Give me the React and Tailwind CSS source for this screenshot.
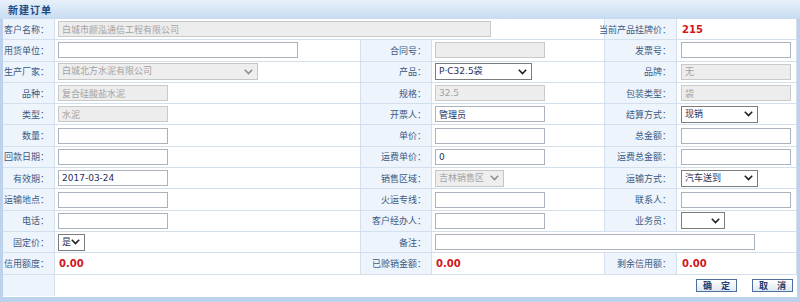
import React from 'react';

const cjk = "font-['Noto_Sans_CJK_SC',sans-serif]";
const num = "font-['DejaVu_Sans','Noto_Sans_CJK_SC',sans-serif]";

const Lbl = ({ children }) => (
  <div className={`flex items-center justify-end pr-[5px] bg-[#eef4fb] border-r border-b border-[#d3dfec] text-[9px] leading-none text-[#3a5a85] whitespace-nowrap ${cjk}`}>
    {children}
  </div>
);

const Val = ({ children, wide = false, pad = 'pl-[3px]' }) => (
  <div className={`flex items-center bg-white border-r border-b border-[#d3dfec] ${pad} ${wide ? 'col-span-3' : ''}`}>
    {children}
  </div>
);

const Field = ({ w = 'w-[110px]', value = '', disabled = false }) => (
  <input
    defaultValue={value}
    disabled={disabled}
    className={`h-[16px] border px-[3px] text-[9px] leading-none outline-none ${num} ${w} ${
      disabled
        ? 'bg-[#eeeded] border-[#c9c9c9] text-[#a3a3a3]'
        : 'bg-white border-[#a9b2bd] text-[#1e2f5c]'
    }`}
  />
);

// dropdown drawn as a box so the text and chevron sit where the old IE control puts them
const Pick = ({ w, value = '', disabled = false }) => (
  <div
    role="combobox"
    className={`h-[17px] flex items-center justify-between border pl-[3px] pr-[4px] text-[9px] leading-none whitespace-nowrap ${num} ${w} ${
      disabled
        ? 'bg-[#eeeeee] border-[#c6c6c6] text-[#a3a3a3]'
        : 'bg-white border-[#7c7c7c] text-[#1e2f5c]'
    }`}
  >
    <span>{value}</span>
    <svg width="9" height="6" viewBox="0 0 9 6" className="shrink-0">
      <path d="M0.8 0.8 L4.5 4.6 L8.2 0.8" fill="none" stroke={disabled ? '#8d8d8d' : '#1c1c1c'} strokeWidth="1.5" />
    </svg>
  </div>
);

const Red = ({ children }) => (
  <span className={`text-[10px] font-bold text-[#d3151c] ${num}`}>{children}</span>
);

export default function App() {
  return (
    <div className="w-[800px] h-[302px] bg-white flex flex-col overflow-hidden">
      <div className="h-[19px] shrink-0 flex items-center pl-[8px] bg-gradient-to-b from-[#e8f1fa] to-[#c7dbf1]">
        <span className={`text-[10px] font-bold tracking-[1px] text-[#1d4a84] ${cjk}`}>新建订单</span>
      </div>

      <div className="flex-1 border-l-[3px] border-r-[3px] border-b-[5px] border-[#bcd2ec] grid grid-cols-[52px_306px_71px_173px_72px_120px] auto-rows-[21.3px]">
        <Lbl>客户名称：</Lbl>
        <Val wide><Field w="w-[433px]" value="白城市颜泓通信工程有限公司" disabled /></Val>
        <Lbl>当前产品挂牌价：</Lbl>
        <Val pad="pl-[5px]"><Red>215</Red></Val>

        <Lbl>用货单位：</Lbl>
        <Val><Field w="w-[240px]" /></Val>
        <Lbl>合同号：</Lbl>
        <Val><Field disabled /></Val>
        <Lbl>发票号：</Lbl>
        <Val pad="pl-[4px]"><Field /></Val>

        <Lbl>生产厂家：</Lbl>
        <Val><Pick w="w-[200px]" value="白城北方水泥有限公司" disabled /></Val>
        <Lbl>产品：</Lbl>
        <Val><Pick w="w-[97px]" value="P·C32.5袋" /></Val>
        <Lbl>品牌：</Lbl>
        <Val pad="pl-[4px]"><Field value="无" disabled /></Val>

        <Lbl>品种：</Lbl>
        <Val><Field value="复合硅酸盐水泥" disabled /></Val>
        <Lbl>规格：</Lbl>
        <Val><Field value="32.5" disabled /></Val>
        <Lbl>包装类型：</Lbl>
        <Val pad="pl-[4px]"><Field value="袋" disabled /></Val>

        <Lbl>类型：</Lbl>
        <Val><Field value="水泥" disabled /></Val>
        <Lbl>开票人：</Lbl>
        <Val><Field value="管理员" /></Val>
        <Lbl>结算方式：</Lbl>
        <Val pad="pl-[4px]"><Pick w="w-[77px]" value="现销" /></Val>

        <Lbl>数量：</Lbl>
        <Val><Field /></Val>
        <Lbl>单价：</Lbl>
        <Val><Field /></Val>
        <Lbl>总金额：</Lbl>
        <Val pad="pl-[4px]"><Field /></Val>

        <Lbl>回款日期：</Lbl>
        <Val><Field /></Val>
        <Lbl>运费单价：</Lbl>
        <Val><Field value="0" /></Val>
        <Lbl>运费总金额：</Lbl>
        <Val pad="pl-[4px]"><Field /></Val>

        <Lbl>有效期：</Lbl>
        <Val><Field value="2017-03-24" /></Val>
        <Lbl>销售区域：</Lbl>
        <Val><Pick w="w-[69px]" value="吉林销售区" disabled /></Val>
        <Lbl>运输方式：</Lbl>
        <Val pad="pl-[4px]"><Pick w="w-[77px]" value="汽车送到" /></Val>

        <Lbl>运输地点：</Lbl>
        <Val><Field /></Val>
        <Lbl>火运专线：</Lbl>
        <Val><Field /></Val>
        <Lbl>联系人：</Lbl>
        <Val pad="pl-[4px]"><Field /></Val>

        <Lbl>电话：</Lbl>
        <Val><Field /></Val>
        <Lbl>客户经办人：</Lbl>
        <Val><Field /></Val>
        <Lbl>业务员：</Lbl>
        <Val pad="pl-[4px]"><Pick w="w-[44px]" /></Val>

        <Lbl>固定价：</Lbl>
        <Val><Pick w="w-[27px]" value="是" /></Val>
        <Lbl>备注：</Lbl>
        <Val wide><Field w="w-[320px]" /></Val>

        <Lbl>信用额度：</Lbl>
        <Val pad="pl-[4px]"><Red>0.00</Red></Val>
        <Lbl>已赊销金额：</Lbl>
        <Val pad="pl-[4px]"><Red>0.00</Red></Val>
        <Lbl>剩余信用额：</Lbl>
        <Val pad="pl-[5px]"><Red>0.00</Red></Val>

        <div className="bg-[#eef4fb] border-r border-[#d3dfec]" />
        <div className="col-span-5 flex items-center justify-end gap-[15px] pr-[4px] bg-white">
          {[['确', '定'], ['取', '消']].map(([a, b]) => (
            <button
              key={a}
              className={`w-[41px] h-[13px] flex items-center justify-center gap-[9px] border border-[#4f6f9c] bg-gradient-to-b from-white to-[#dde7f3] text-[9px] leading-none font-bold text-[#1f3f6e] ${cjk}`}
            >
              <span>{a}</span>
              <span>{b}</span>
            </button>
          ))}
        </div>
      </div>
    </div>
  );
}
